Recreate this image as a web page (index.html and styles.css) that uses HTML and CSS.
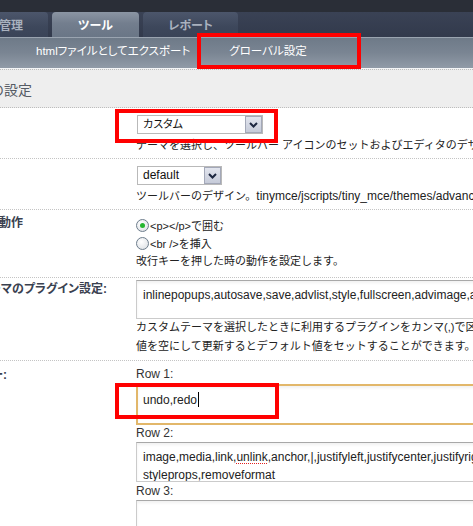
FILE: index.html
```html
<!DOCTYPE html>
<html lang="ja">
<head>
<meta charset="utf-8">
<title>グローバル設定</title>
<link rel="stylesheet" href="styles.css">
</head>
<body>
<div class="topbar"></div>
<nav class="tabs">
  <div class="tab tab-first">管理</div>
  <div class="tab tab-active">ツール</div>
  <div class="tab tab-report">レポート</div>
</nav>
<nav class="subnav">
  <a class="subnav-item">htmlファイルとしてエクスポート</a>
  <a class="subnav-item">グローバル設定</a>
</nav>
<div class="section-head"><h2 class="section-title">TinyMCEの設定</h2></div>

<div class="row row-theme">
  <div class="row-label"></div>
  <div class="row-field">
    <div class="select select-theme">
      <span class="select-value">カスタム</span>
      <span class="select-btn"><svg width="9" height="6" viewBox="0 0 9 6"><polyline points="1,1 4.5,4.5 8,1" fill="none" stroke="#1d2740" stroke-width="2"/></svg></span>
    </div>
    <p class="desc">テーマを選択し、ツールバー アイコンのセットおよびエディタのデザインを選択します。</p>
  </div>
</div>

<div class="row row-skin">
  <div class="row-label"></div>
  <div class="row-field">
    <div class="select select-skin">
      <span class="select-value latin">default</span>
      <span class="select-btn"><svg width="9" height="6" viewBox="0 0 9 6"><polyline points="1,1 4.5,4.5 8,1" fill="none" stroke="#1d2740" stroke-width="2"/></svg></span>
    </div>
    <p class="desc">ツールバーのデザイン。<span class="latin">tinymce/jscripts/tiny_mce/themes/advanced/skins/</span></p>
  </div>
</div>

<div class="row row-newline">
  <div class="row-label"><span class="label-text lbl-newline">改行時の動作</span></div>
  <div class="row-field">
    <div class="radio-line"><span class="radio radio-checked"></span><span>&lt;p&gt;&lt;/p&gt;で囲む</span></div>
    <div class="radio-line"><span class="radio"></span><span>&lt;br /&gt;を挿入</span></div>
    <p class="desc desc-tight">改行キーを押した時の動作を設定します。</p>
  </div>
</div>

<div class="row row-plugins">
  <div class="row-label"><span class="label-text lbl-plugins">カスタムテーマのプラグイン設定:</span></div>
  <div class="row-field">
    <div class="textbox textbox-plugins">inlinepopups,autosave,save,advlist,style,fullscreen,advimage,advlink</div>
    <p class="desc desc-multi">カスタムテーマを選択したときに利用するプラグインをカンマ(,)で区切って入力します。<br>値を空にして更新するとデフォルト値をセットすることができます。</p>
  </div>
</div>

<div class="row row-buttons">
  <div class="row-label"><span class="label-text lbl-buttons">ボタンバー:</span></div>
  <div class="row-field">
    <div class="field-caption">Row 1:</div>
    <div class="textbox textbox-focus">undo,redo<span class="caret"></span></div>
    <div class="field-caption">Row 2:</div>
    <div class="textbox textbox-two">image,media,link,<span class="misspelt">unlink</span>,anchor,|,justifyleft,justifycenter,justifyright,justifyfull<br><span class="misspelt">styleprops</span>,<span class="misspelt">removeformat</span></div>
    <div class="field-caption">Row 3:</div>
    <div class="textbox textbox-two"></div>
  </div>
</div>

<div class="mark mark-nav"></div>
<div class="mark mark-theme"></div>
<div class="mark mark-row1"></div>
</body>
</html>
```

FILE: styles.css
```css
* { box-sizing: border-box; }

body {
  margin: 0;
  width: 473px;
  height: 526px;
  overflow: hidden;
  position: relative;
  background: #fff;
  font-family: "Liberation Sans", "Noto Sans CJK JP", sans-serif;
  font-size: 11px;
  color: #222;
}

.latin { font-size: 12px; }

.topbar {
  height: 12px;
  background: #2a2e37;
}

.tabs {
  display: flex;
  gap: 4px;
  height: 25px;
  background: linear-gradient(#3a4255, #323a4c);
  white-space: nowrap;
}

.tab {
  flex: none;
  height: 25px;
  display: flex;
  align-items: center;
  justify-content: center;
  font-size: 12px;
  font-weight: bold;
  color: #a9b1be;
  border-radius: 4px 4px 0 0;
  background: linear-gradient(#4c566b, #3d475b 60%, #3a4458);
  font-feature-settings: "palt";
}

.tab-first { width: 74px; margin-left: -26px; }
.tab-active {
  width: 87px;
  color: #fff;
  background: linear-gradient(#8b95a3, #737e8e 45%, #6a7686);
}
.tab-report { width: 95px; }

.subnav {
  height: 32px;
  display: flex;
  align-items: flex-start;
  gap: 39px;
  padding: 6px 0 0 36px;
  border-top: 1px solid #9aa4b0;
  border-bottom: 1px solid #f4f5f6;
  background: linear-gradient(#6e7a88, #7a8593 50%, #919ba7);
  white-space: nowrap;
}

.subnav-item {
  color: #fff;
  font-size: 11.5px;
  line-height: 14px;
  text-decoration: none;
  font-feature-settings: "palt";
}

.section-head {
  height: 39px;
  display: flex;
  align-items: center;
  background: #eeeeee;
  border-top: 1px dotted #bdbdbd;
  border-bottom: 1px dotted #bdbdbd;
  overflow: hidden;
}

.section-title {
  flex: none;
  margin: 0 0 0 -168px;
  width: 200px;
  text-align: right;
  font-size: 14px;
  font-weight: normal;
  color: #555b64;
  white-space: nowrap;
}

.row {
  display: flex;
  border-bottom: 1px dotted #c4c4c4;
  white-space: nowrap;
}

.row-label {
  flex: none;
  width: 128px;
  overflow: hidden;
  padding-top: 6px;
}

.label-text {
  display: block;
  margin-left: -200px;
  text-align: right;
  font-size: 12px;
  line-height: 14px;
  font-weight: bold;
  color: #3a4150;
  font-feature-settings: "palt";
}
.lbl-newline { width: 223px; }
.lbl-plugins { width: 307px; }
.lbl-buttons { width: 207px; }

.row-plugins .row-label { padding-top: 4px; }
.row-buttons .row-label { padding-top: 7px; }

.row-field {
  flex: 1;
  min-width: 0;
  padding-left: 8px;
}

.row-theme .row-field,
.row-skin .row-field { padding-top: 7px; padding-bottom: 6px; }
.row-newline .row-field { padding-top: 6px; padding-bottom: 9px; }
.row-plugins .row-field { padding-top: 2px; padding-bottom: 4px; }
.row-buttons .row-field { padding-top: 6px; }

.select {
  display: flex;
  height: 19px;
  margin-left: 1px;
  border: 1px solid #b9b9b9;
  background: #fff;
}
.select-theme { width: 126px; }
.select-skin { width: 85px; }

.select-value {
  flex: 1;
  padding-left: 5px;
  line-height: 17px;
  font-size: 11px;
  color: #111;
  font-feature-settings: "palt";
}
.select-value.latin { font-size: 12px; }

.select-btn {
  flex: none;
  width: 17px;
  display: flex;
  align-items: center;
  justify-content: center;
  border: 1px solid #a3a8b8;
  background: linear-gradient(#e2e5ee, #c6cbd9);
}

.desc {
  margin: 4px 0 0;
  line-height: 14px;
  font-size: 11px;
  color: #222;
}
.desc-tight { margin-top: 2px; }
.desc-multi { margin-top: -1px; line-height: 19px; }

.radio-line {
  display: flex;
  align-items: center;
  gap: 1px;
  height: 18px;
  font-size: 11px;
  color: #222;
}

.radio {
  flex: none;
  position: relative;
  width: 13px;
  height: 13px;
  border-radius: 50%;
  border: 1px solid #6d7d8c;
  background: radial-gradient(circle at 40% 35%, #ffffff, #d8dce1);
}
.radio-checked::after {
  content: "";
  position: absolute;
  left: 3px;
  top: 3px;
  width: 5px;
  height: 5px;
  border-radius: 50%;
  background: #25b530;
}

.textbox {
  width: 360px;
  border: 1px solid #cbcbcb;
  border-top-color: #a8a8a8;
  background: #fff;
  box-shadow: inset 0 2px 3px rgba(0, 0, 0, 0.06);
  font-size: 12px;
  line-height: 14px;
  padding-left: 6px;
  color: #222;
  overflow: hidden;
}

.textbox-plugins {
  height: 39px;
  padding-top: 7px;
}

.textbox-focus {
  height: 41px;
  margin-top: 3px;
  border: 2px solid #e2b76a;
  padding-top: 6px;
  padding-left: 5px;
}

.caret {
  display: inline-block;
  width: 1px;
  height: 15px;
  margin-left: 1px;
  vertical-align: -3px;
  background: #000;
}

.textbox-two {
  height: 40px;
  margin-top: 2px;
  padding-top: 5px;
  line-height: 18px;
}

.field-caption {
  margin-top: 1px;
  font-size: 12px;
  line-height: 14px;
  color: #333;
}
.row-buttons .field-caption:first-child { margin-top: 0; }
.textbox-focus + .field-caption { margin-top: 1px; }
.textbox-two + .field-caption { margin-top: 2px; }

.misspelt {
  text-decoration: underline dotted #e02020;
  text-underline-offset: 2px;
}

.mark {
  position: absolute;
  border: 4px solid #ff0000;
}
.mark-nav { left: 197px; top: 33px; width: 164px; height: 36px; }
.mark-theme { left: 115px; top: 109px; width: 163px; height: 34px; }
.mark-row1 { left: 115px; top: 383px; width: 164px; height: 36px; }
```
